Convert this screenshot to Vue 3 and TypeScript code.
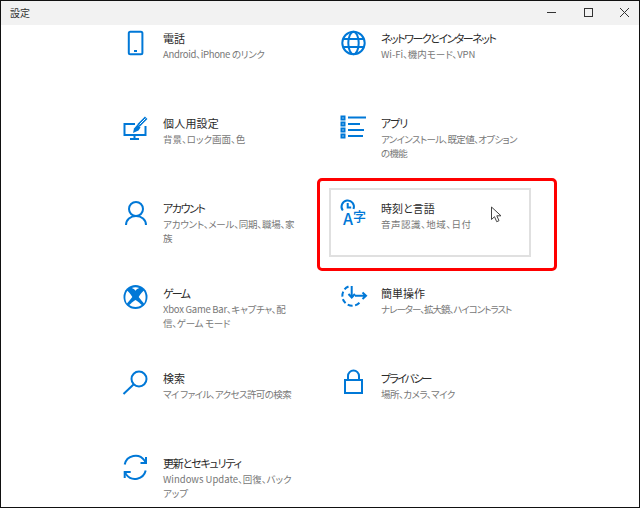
<template>
  <div class="window">
    <header class="titlebar">
      <span class="app-title">設定</span>
      <div class="controls">
        <svg width="46" height="24" viewBox="0 0 46 24"><path d="M26 11.500h9" /></svg>
        <svg width="36" height="24" viewBox="0 0 36 24"><rect x="17.500" y="7.500" width="8" height="8" /></svg>
        <svg width="36" height="24" viewBox="0 0 36 24"><path d="M17 7l9 9M26 7l-9 9" /></svg>
      </div>
    </header>

    <main class="grid">
      <article
        v-for="item in items"
        :key="item.title"
        class="card"
        :class="{ 'card-hover': item.hover }"
      >
        <svg class="icon" width="28" height="28" viewBox="0 0 28 28">
          <template v-if="item.icon === 'phone'">
            <rect x="7.800" y="2.800" width="13.600" height="22.400" rx="1.500" />
            <rect class="solid" x="13" y="21" width="3" height="2" />
          </template>
          <template v-else-if="item.icon === 'globe'">
            <circle cx="14.500" cy="14" r="11.200" />
            <ellipse cx="14.500" cy="14" rx="5.200" ry="11.200" />
            <path d="M4 10h21M4 18h21" />
          </template>
          <template v-else-if="item.icon === 'brush'">
            <path d="M14 10H3.500v11h21V12" />
            <path d="M9 25h9M13.500 21v4" />
            <path class="thick" d="M25.200 3.800L17.500 11.500" />
            <path class="inner" d="M24.500 4.500L18.500 10.500" />
            <path class="solid" d="M16.500 10.500l3 3-2 3-5.500 2.500 1-4.500z" />
          </template>
          <template v-else-if="item.icon === 'apps'">
            <rect x="2.500" y="2.500" width="3" height="3" />
            <rect x="2.500" y="8.500" width="3" height="3" />
            <rect x="2.500" y="14.500" width="3" height="3" />
            <rect x="2.500" y="20.500" width="3" height="3" />
            <path d="M9 3.500h18M9 10h12M9 16h16M9 22h15" />
          </template>
          <template v-else-if="item.icon === 'person'">
            <circle cx="15" cy="10" r="7" />
            <path d="M5 26c0-5.500 4.500-9 10-9s10 3.500 10 9" />
          </template>
          <template v-else-if="item.icon === 'clock'">
            <path d="M3.800 11.500A6.200 6.200 0 1 1 14.500 10" />
            <path d="M8.700 4v4.500h3.500" />
            <text class="glyph" x="4" y="26" font-size="16">A</text>
            <text class="glyph" x="14" y="21.500" font-size="13">字</text>
          </template>
          <template v-else-if="item.icon === 'xbox'">
            <circle class="solid" cx="14.500" cy="13" r="12" />
            <path class="cut" d="M6.300 6.700C8 8.200 10 10.500 11.300 13C9.500 15.500 7.500 17.500 6 19.500C3.800 16 3.800 10.500 6.300 6.700Z" />
            <path class="cut" d="M22.700 6.700C21 8.200 19 10.500 17.700 13C19.500 15.500 21.500 17.500 23 19.500C25.200 16 25.200 10.500 22.700 6.700Z" />
            <path class="cut" d="M10.800 3.900C12.300 4.400 13.500 5.300 14.500 6.700C15.500 5.300 16.700 4.400 18.200 3.900C16 3 13 3 10.800 3.900Z" />
            <path class="cut" d="M14.500 16C12.500 17.300 10 19.300 8.300 21C11.500 23.500 17.500 23.500 20.700 21C19 19.300 16.500 17.300 14.500 16Z" />
          </template>
          <template v-else-if="item.icon === 'ease'">
            <path d="M9.500 2.500A10 10 0 1 0 21.500 17.500" stroke-dasharray="5 2.500" />
            <path d="M12.700 2v11.500M9.500 10l3.200 3.500 3.200-3.500M16 11.700h11M23.500 8.500l3.500 3.200-3.500 3.200" />
          </template>
          <template v-else-if="item.icon === 'search'">
            <circle cx="18" cy="10" r="7.500" />
            <path d="M12.500 15.500l-10 9.500" />
          </template>
          <template v-else-if="item.icon === 'lock'">
            <rect x="6" y="11" width="17" height="13" />
            <path d="M9 11V7a5.500 5.500 0 0 1 11 0v4" />
          </template>
          <template v-else>
            <path d="M3.700 10.500A11 11 0 0 1 23.500 6.500l1.500 2.500" />
            <path d="M25 3V9h-5.500" />
            <path d="M24.700 16.500A11 11 0 0 1 5.200 20.500L3.700 18" />
            <path d="M3.700 24V18h6" />
          </template>
        </svg>
        <div class="text">
          <h3 class="title" :style="{ letterSpacing: `${item.ts ?? 0}px` }">{{ item.title }}</h3>
          <p class="desc" :style="{ letterSpacing: `${item.ds ?? 0}px` }">{{ item.desc }}</p>
        </div>
      </article>
    </main>

    <div class="highlight"></div>
    <svg class="cursor" width="14" height="18" viewBox="0 0 14 18">
      <path d="M1.500 1v12.500l3-2.800 2.200 5 2.300-1-2.200-4.900h4.200z" />
    </svg>
  </div>
</template>

<script setup lang="ts">
interface Item {
  icon: string
  title: string
  desc: string
  hover?: boolean
  ts?: number
  ds?: number
}

const items: Item[] = [
  { icon: 'phone', title: '電話', desc: 'Android、iPhone のリンク', ds: -0.3 },
  { icon: 'globe', title: 'ネットワークとインターネット', desc: 'Wi-Fi、機内モード、VPN', ts: -1.5 },
  { icon: 'brush', title: '個人用設定', desc: '背景、ロック画面、色', ts: 0.2 },
  { icon: 'apps', title: 'アプリ', desc: 'アンインストール、既定値、オプション\nの機能', ts: -1, ds: -0.65 },
  { icon: 'person', title: 'アカウント', desc: 'アカウント、メール、同期、職場、家\n族', ts: -1.4, ds: -0.2 },
  { icon: 'clock', title: '時刻と言語', desc: '音声認識、地域、日付', hover: true, ds: 0.5 },
  { icon: 'xbox', title: 'ゲーム', desc: 'Xbox Game Bar、キャプチャ、配\n信、ゲーム モード', ts: -1.8, ds: -0.25 },
  { icon: 'ease', title: '簡単操作', desc: 'ナレーター、拡大鏡、ハイコントラスト', ds: -1 },
  { icon: 'search', title: '検索', desc: 'マイ ファイル、アクセス許可の検索', ds: -0.6 },
  { icon: 'lock', title: 'プライバシー', desc: '場所、カメラ、マイク', ts: -1.8, ds: -0.5 },
  { icon: 'sync', title: '更新とセキュリティ', desc: 'Windows Update、回復、バック\nアップ', ts: -1.2 }
]
</script>

<style>
html,
body {
  margin: 0;
  background: #fff;
}
</style>

<style scoped>
.window {
  position: relative;
  box-sizing: border-box;
  width: 640px;
  height: 508px;
  overflow: hidden;
  border: 1px solid #111;
  background: #fff;
  font-family: "Noto Sans CJK JP", "Noto Sans", sans-serif;
  font-feature-settings: "palt";
}

.titlebar {
  position: relative;
  z-index: 1;
  display: flex;
  align-items: center;
  justify-content: space-between;
  height: 24px;
  padding-left: 9px;
  background: #f2f2f2;
}

.app-title {
  margin-bottom: 2px;
  font-size: 10px;
  color: #333;
}

.controls {
  display: flex;
}

.controls svg {
  fill: none;
  stroke: #333;
  stroke-width: 1;
}

.grid {
  display: grid;
  grid-template-columns: 202px 202px;
  grid-auto-rows: 69px;
  gap: 16px;
  margin-top: -7px;
  padding-left: 110px;
}

.card {
  display: flex;
  align-items: flex-start;
  gap: 14px;
  box-sizing: border-box;
  padding: 9px 8px 0;
  border: 2px solid transparent;
}

.card-hover {
  border-color: #e0e0e0;
}

.icon {
  flex: none;
  overflow: visible;
  fill: none;
  stroke: #0078d7;
  stroke-width: 2;
}

.icon .solid {
  fill: #0078d7;
  stroke: none;
}

.icon .cut {
  fill: #fff;
  stroke: none;
}

.icon .thick {
  stroke-width: 3.500;
}

.icon .inner {
  stroke: #fff;
  stroke-width: 1;
}

.icon .glyph {
  fill: #0078d7;
  stroke: none;
  font-weight: 500;
}

.text {
  width: 150px;
  flex: none;
  margin-top: 1px;
}

.title {
  margin: 0;
  font-size: 11px;
  font-weight: 400;
  line-height: 16px;
  color: #2b2b2b;
  white-space: nowrap;
}

.desc {
  margin: 2px 0 0;
  font-size: 9.500px;
  line-height: 13.500px;
  color: #777;
  white-space: pre-line;
}

.highlight {
  position: absolute;
  left: 316px;
  top: 177px;
  width: 234px;
  height: 87px;
  border: 3px solid #f00;
  border-radius: 5px;
}

.cursor {
  position: absolute;
  left: 489px;
  top: 205px;
  fill: #fff;
  stroke: #444;
  stroke-width: 1;
}
</style>
